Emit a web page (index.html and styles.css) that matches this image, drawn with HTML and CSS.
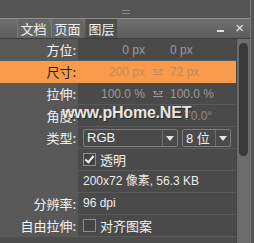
FILE: index.html
```html
<!DOCTYPE html>
<html lang="zh">

<head>
    <meta charset="UTF-8">
    <title>图层属性</title>
    <link rel="stylesheet" href="styles.css">
</head>

<body>
    <div class="window">
        <!-- Grip strip -->
        <div class="top">
            <span class="grip"></span>
        </div>

        <!-- Tab bar -->
        <div class="tabbar">
            <div class="tab">文档</div>
            <div class="tab">页面</div>
            <div class="tab active">图层</div>
            <div class="spacer"></div>
            <span class="btn-min"></span>
            <span class="btn-close">×</span>
        </div>

        <div class="main">
            <div class="panel">
                <div class="row">
                    <div class="label">方位:</div>
                    <div class="value pair">
                        <span class="num">0 px</span>
                        <span class="link"></span>
                        <span class="num2">0 px</span>
                    </div>
                </div>

                <div class="row selected">
                    <div class="label">尺寸:</div>
                    <div class="value pair">
                        <span class="num">200 px</span>
                        <span class="link">
                            <svg width="12" height="8" viewBox="0 0 12 8">
                                <path d="M1 1.5h4M7 1.5h4M2.5 1.5v2.5h7V1.5M1 6.5h10" fill="none" stroke="currentColor" stroke-width="1"/>
                            </svg>
                        </span>
                        <span class="num2">72 px</span>
                    </div>
                </div>

                <div class="row">
                    <div class="label">拉伸:</div>
                    <div class="value pair">
                        <span class="num">100.0 %</span>
                        <span class="link">
                            <svg width="12" height="8" viewBox="0 0 12 8">
                                <path d="M1 1.5h4M7 1.5h4M2.5 1.5v2.5h7V1.5M1 6.5h10" fill="none" stroke="currentColor" stroke-width="1"/>
                            </svg>
                        </span>
                        <span class="num2">100.0 %</span>
                    </div>
                </div>

                <div class="row">
                    <div class="label">角度:</div>
                    <div class="value pair">
                        <span class="num"></span>
                        <span class="link"></span>
                        <span class="num2 angle">70.0°</span>
                    </div>
                </div>

                <div class="row">
                    <div class="label">类型:</div>
                    <div class="value selects">
                        <div class="select wide">
                            <span class="select-text">RGB</span>
                            <span class="arrow"></span>
                        </div>
                        <div class="select narrow">
                            <span class="select-text">8 位</span>
                            <span class="arrow"></span>
                        </div>
                    </div>
                </div>

                <div class="row">
                    <div class="label"></div>
                    <div class="value">
                        <span class="check checked"></span>
                        <span class="text">透明</span>
                    </div>
                </div>

                <div class="row">
                    <div class="label"></div>
                    <div class="value">
                        <span class="text info">200x72 像素, 56.3 KB</span>
                    </div>
                </div>

                <div class="row">
                    <div class="label">分辨率:</div>
                    <div class="value">
                        <span class="text info">96 dpi</span>
                    </div>
                </div>

                <div class="row">
                    <div class="label">自由拉伸:</div>
                    <div class="value">
                        <span class="check"></span>
                        <span class="text">对齐图案</span>
                    </div>
                </div>

                <!-- Watermark over the angle row -->
                <div class="watermark">www.pHome.NET</div>
            </div>

            <div class="scroll">
                <div class="thumb"></div>
            </div>
        </div>
    </div>
</body>

</html>
```

FILE: styles.css
```css
body {
    margin: 0;
    background-color: #555555;
    font-family: "Noto Sans CJK SC", "Liberation Sans", sans-serif;
    width: 254px;
    height: 243px;
    overflow: hidden;
}

.window {
    width: 250px;
    height: 243px;
    border-right: 1px solid #7c7c7c;
    background-color: #4d4d4d;
}

.top {
    height: 18px;
    background-color: #545454;
    position: relative;
}

.grip {
    position: absolute;
    left: 122px;
    top: 10px;
    width: 8px;
    height: 2px;
    border-top: 1px solid #8a8a8a;
    border-bottom: 1px solid #8a8a8a;
}

.tabbar {
    height: 19px;
    border-top: 1px solid #8e8e8e;
    border-bottom: 1px solid #3e3e3e;
    background: linear-gradient(to bottom, #707070, #5c5c5c);
    display: flex;
    align-items: stretch;
    padding-left: 17px;
}

.tab {
    width: 31px;
    margin-right: 2px;
    color: #f0f0f0;
    font-size: 13px;
    line-height: 19px;
    text-align: center;
    background-color: #666666;
    border-left: 1px solid #7a7a7a;
}

.tab.active {
    background-color: #4e4e4e;
    border-left: 1px solid #5a5a5a;
}

.spacer {
    flex: 1;
}

.btn-min {
    width: 7px;
    height: 2px;
    background-color: #e0e0e0;
    margin-top: 11px;
    margin-right: 11px;
}

.btn-close {
    color: #e8e8e8;
    font-family: "Liberation Sans", sans-serif;
    font-size: 15px;
    line-height: 17px;
    margin-right: 6px;
}

.main {
    display: flex;
    height: 205px;
}

.panel {
    width: 237px;
    position: relative;
}

.row {
    display: flex;
    height: 21px;
    border-bottom: 1px solid #5a5a5a;
}

.label {
    width: 76px;
    padding-right: 2px;
    background-color: #585858;
    color: #f2f2f2;
    font-size: 13px;
    line-height: 21px;
    text-align: right;
}

.value {
    flex: 1;
    background-color: #4a4a4a;
    display: flex;
    align-items: center;
    padding-left: 5px;
    color: #f0f0f0;
    font-size: 13px;
}

.pair {
    padding-left: 0;
    font-family: "Liberation Sans", sans-serif;
    font-size: 12px;
    color: #9a9a9a;
}

.num {
    width: 67px;
    text-align: right;
}

.link {
    width: 25px;
    display: flex;
    justify-content: center;
}

.num2.angle {
    margin-left: 14px;
    color: #8a8a8a;
}

.row.selected .label,
.row.selected .value {
    background-color: #f89b4c;
}

.row.selected {
    border-bottom-color: #f89b4c;
}

.row.selected .label {
    color: #1e1e1e;
}

.row.selected .pair {
    color: #c4895a;
}

.selects {
    gap: 4px;
}

.select {
    height: 18px;
    border: 1px solid #7c7c7c;
    border-radius: 2px;
    display: flex;
    align-items: center;
    box-sizing: border-box;
}

.select.wide {
    width: 95px;
}

.select.narrow {
    width: 49px;
}

.select-text {
    flex: 1;
    padding-left: 3px;
    font-family: "Liberation Sans", "Noto Sans CJK SC", sans-serif;
    font-size: 13px;
    color: #f4f4f4;
}

.arrow {
    width: 14px;
    height: 16px;
    border-left: 1px solid #6c6c6c;
    position: relative;
}

.arrow::after {
    content: "";
    position: absolute;
    left: 3px;
    top: 6px;
    border-left: 4px solid transparent;
    border-right: 4px solid transparent;
    border-top: 5px solid #e4e4e4;
}

.check {
    width: 11px;
    height: 11px;
    border: 1px solid #8c8c8c;
    background-color: #444444;
    margin-right: 4px;
    position: relative;
}

.check.checked::after {
    content: "";
    position: absolute;
    left: 3px;
    top: 0px;
    width: 3px;
    height: 7px;
    border-right: 2px solid #f0f0f0;
    border-bottom: 2px solid #f0f0f0;
    transform: rotate(40deg);
}

.text {
    line-height: 21px;
}

.info {
    font-family: "Liberation Sans", "Noto Sans CJK SC", sans-serif;
    font-size: 12px;
    color: #ececec;
}

.watermark {
    position: absolute;
    left: 62px;
    top: 65px;
    font-family: "Liberation Sans", sans-serif;
    font-weight: bold;
    font-size: 16px;
    letter-spacing: -0.2px;
    color: #e6e6e6;
    text-shadow: 1px 1px 1px #2a2a2a;
}

.scroll {
    width: 13px;
    background-color: #6c6c6c;
    border-left: 1px solid #434343;
}

.thumb {
    width: 9px;
    height: 113px;
    margin: 4px 0 0 2px;
    background-color: #3a3a3a;
    border-radius: 5px;
}
```
